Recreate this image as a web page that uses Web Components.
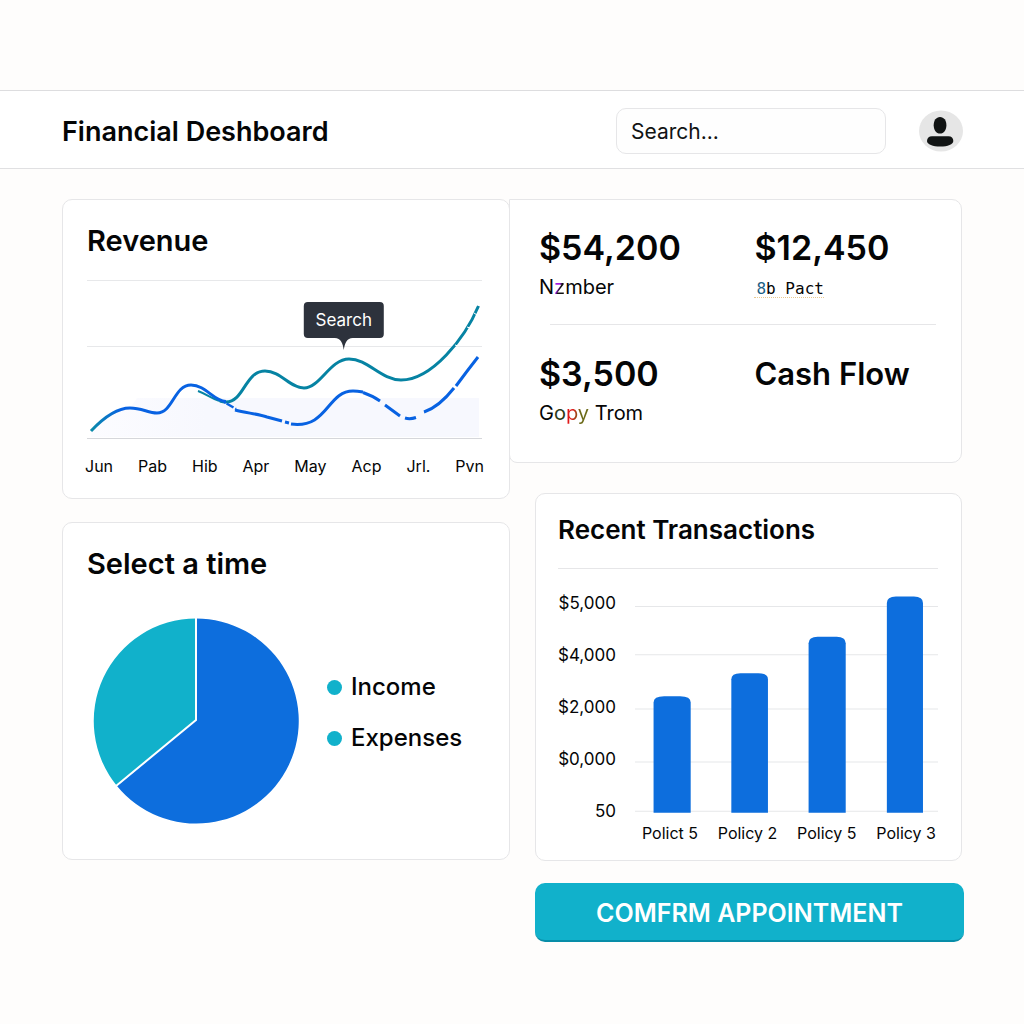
<!DOCTYPE html>
<html lang="en">
<head>
<meta charset="utf-8">
<meta name="viewport" content="width=device-width, initial-scale=1">
<title>Financial Deshboard</title>
<style>
  body {
    margin: 0;
    padding-top: 90px;
    background: #fefdfc;
    color: #040506;
    font-family: Inter, "Liberation Sans", sans-serif;
    --line: #e6e6e8;
    --blue: #0d6edd;
    --teal: #11b1cb;
  }
</style>
</head>
<body>
<finance-dashboard></finance-dashboard>

<script>
const define = (name, html, setup) => {
  const template = document.createElement('template');
  template.innerHTML = html;
  customElements.define(name, class extends HTMLElement {
    constructor() {
      super();
      this.attachShadow({ mode: 'open' }).append(template.content.cloneNode(true));
    }
    connectedCallback() { if (setup) setup(this, this.shadowRoot); }
  });
};

define('user-avatar', `
  <style>
    :host { display: block; flex: none; }
    button { display: block; padding: 0; border: 0; background: none; cursor: pointer; }
    svg { display: block; }
  </style>
  <button type="button" aria-label="Account">
    <svg width="44" height="42" viewBox="0 0 44 42" aria-hidden="true">
      <ellipse cx="22" cy="21" rx="22" ry="20.5" fill="#e6e6e6"/>
      <path d="M21 7c4 0 6.400 3.600 6.400 8.200 0 4.700-2.600 8.300-6.400 8.300s-6.300-3.600-6.300-8.300C14.700 10.600 17.100 7 21 7z" fill="#111414"/>
      <path d="M13 26.300h16.500c3 0 4.800 2 4.800 4.600 0 3.300-5.600 5.700-13 5.700S8 34.200 8 30.900c0-2.600 2-4.600 5-4.600z" fill="#111414"/>
    </svg>
  </button>`);

define('search-box', `
  <style>
    :host { display: block; width: 270px; }
    input {
      display: block; box-sizing: border-box; width: 100%; height: 46px; padding: 0 14px;
      border: 1px solid var(--line); border-radius: 10px; background: #fefefe;
      font: 400 21px/28px Inter, "Liberation Sans", sans-serif; color: #111;
    }
    input::placeholder { color: #111313; opacity: 1; }
  </style>
  <input type="search" aria-label="Search" placeholder="Search...">`);

define('page-header', `
  <style>
    :host {
      display: flex; align-items: center; gap: 33px; padding: 17px 61px 14px 62px;
      border-top: 1px solid #dddddf; border-bottom: 1px solid #e0e0e2; background: #fff;
    }
    h1 { flex: 1; margin: 0; padding-top: 2px; font-size: 27px; line-height: 36px; font-weight: 600; }
  </style>
  <h1><slot></slot></h1>
  <search-box></search-box>
  <user-avatar></user-avatar>`);

define('panel-card', `
  <style>
    :host {
      display: block; box-sizing: border-box; background: #fff;
      border: 1px solid var(--line); border-radius: 10px;
      padding: 24px 27px 20px 24px;
    }
    ::slotted(h2) { margin: 0; font-size: 29px; line-height: 34px; font-weight: 600; }
  </style>
  <slot name="title"></slot>
  <slot></slot>`);

define('revenue-chart', `
  <style>
    :host { display: block; margin-top: 22px; }
    .plot { position: relative; }
    svg { display: block; width: 100%; height: auto; overflow: visible; }
    .tip {
      position: absolute; left: 65%; top: 22px; transform: translateX(-50%);
      padding: 6px 12px; border-radius: 4px; background: #2d323c;
      color: #fff; font-size: 17px; line-height: 24px;
    }
    .tip svg { position: absolute; top: 100%; left: 50%; width: 18px; margin-left: -9px; }
    .months { display: flex; justify-content: space-between; margin: 14px -2px 0; font-size: 16px; line-height: 24px; }
  </style>
  <div class="plot">
    <svg viewBox="0 0 395 160" fill="none" role="img" aria-label="Revenue by month">
      <defs>
        <linearGradient id="start" gradientUnits="userSpaceOnUse" x1="4" y1="0" x2="34" y2="0">
          <stop offset="0" stop-color="#0b8ba8"/><stop offset="1" stop-color="#0862e2"/>
        </linearGradient>
        <linearGradient id="shade" gradientUnits="userSpaceOnUse" x1="0" y1="0" x2="120" y2="0">
          <stop offset="0" stop-color="#fcfcff"/><stop offset="1" stop-color="#f7f8fe"/>
        </linearGradient>
      </defs>
      <path d="M4 157V151C20 135 32 128 43 128L50 118H392V157z" fill="url(#shade)"/>
      <path d="M0 .5H395M0 66.500H395" stroke="#e7e8ea"/>
      <path d="M0 158.500H395" stroke="#d6d7db"/>
      <path d="M111 111C122 115 128 122 139 122" stroke="#0683a3" stroke-width="2"/>
      <g stroke-width="3">
        <path d="M133 121Q136 122 139 122C157 122 158 91 178 91C194 91 203 108 217 108C233 108 243 79 262 79C281 79 294 100 314 100C345 100 378 58 391.500 26" stroke="#0683a3"/>
        <path d="M4 151C20 134 33 128 43 128C55 128 61 133 70 133C86 133 87 105 104 105C119 105 126 121 139 121.500" stroke="url(#start)"/>
        <path d="M137 122L149 129" stroke="#0862e2" stroke-width="2.500" stroke-dasharray="2 1 8 2"/>
        <path d="M148 130C160 133 171 134 180 137L195 141" stroke="#0862e2"/>
        <path d="M198 142l4 1M204 144C241 149 240 111 266 111Q270 111 276 112" stroke="#0862e2"/>
        <path d="M276 112.500Q286 116 293 121M298 125L313 136M318 138Q323 139.500 329 137.500M337 132Q352 127 367 108M369 106Q380 91 391 77" stroke="#0862e2"/>
      </g>
      <path d="M368 65l3 1M380 47l3 1M387 33l3 2" stroke="#fff" stroke-width="1"/>
    </svg>
    <div class="tip" role="tooltip">Search
      <svg viewBox="0 0 18 12" aria-hidden="true"><path d="M0 0C6 0 8 5 9 12C10 5 12 0 18 0z" fill="#2d323c"/></svg>
    </div>
  </div>
  <div class="months"></div>`,
  (host, root) => {
    root.querySelector('.months').innerHTML =
      host.getAttribute('months').split(' ').map(m => `<span>${m}</span>`).join('');
  });

define('share-chart', `
  <style>
    :host { display: flex; align-items: center; gap: 28px; margin: 37px 0 15px; padding-left: 6px; }
    svg { display: block; flex: 0 1 206px; min-width: 0; }
    ul { display: grid; gap: 19px; margin: 0; padding: 0 0 17px; list-style: none; font-size: 24px; line-height: 32px; font-weight: 500; }
    li { display: flex; align-items: center; gap: 9px; }
    li::before { content: ""; width: 15px; height: 15px; border-radius: 50%; background: var(--teal); }
  </style>
  <svg viewBox="0 0 206 206" role="img" aria-label="Income and expenses">
    <path d="M103 102V.5A102.500 102.500 0 1 1 24 168z" fill="var(--blue)"/>
    <path d="M103 102L24 168A102.500 102.500 0 0 1 103 .5z" fill="var(--teal)"/>
    <path d="M103 0V102L23 168" fill="none" stroke="#fff" stroke-width="2"/>
  </svg>
  <ul><li>Income</li><li>Expenses</li></ul>`);

define('stat-item', `
  <style>
    :host { display: block; }
    strong { display: block; font-size: 34px; line-height: 44px; font-weight: 600; }
    :host([kind="text"]) strong { font-size: 31px; }
    span { display: block; margin-top: 4px; font-size: 20px; line-height: 26px; }
  </style>
  <strong><slot name="value"></slot></strong>
  <span><slot></slot></span>`);

define('stats-panel', `
  <style>
    :host {
      display: block; box-sizing: border-box; margin-left: -1px; padding: 26px 25px 36px 29px;
      background: #fff; border: 1px solid var(--line); border-radius: 0 10px 10px 8px;
    }
    .row { display: grid; grid-template-columns: 216fr 182fr; }
    b { font-weight: inherit; }
    hr { margin: 24px 0 27px 11px; border: 0; border-top: 1px solid var(--line); }
    .violet { color: transparent; background: linear-gradient(115deg, #a21be0 45%, #101010 55%); background-clip: text; }
    .red { color: transparent; background: linear-gradient(100deg, #e01818 30%, #6b6a18 60%); background-clip: text; }
    .olive { color: #2c3a18; }
    .glitch {
      display: inline-block; padding-left: 2px; font: 16px/16px "DejaVu Sans Mono", monospace;
      border-bottom: 1px dotted #e9c88f;
    }
    .glitch i { font-style: normal; color: #1d5f86; }
  </style>
  <div class="row">
    <stat-item><b slot="value">$54,200</b>N<span class="violet">z</span>mber</stat-item>
    <stat-item><b slot="value">$12,450</b><span class="glitch"><i>8</i>b Pact</span></stat-item>
  </div>
  <hr>
  <div class="row">
    <stat-item><b slot="value">$3,500</b>G<span class="olive">o</span><span class="red">py</span> Trom</stat-item>
    <stat-item kind="text"><b slot="value">Cash Flow</b></stat-item>
  </div>`);

define('transactions-chart', `
  <style>
    :host { display: flex; gap: 19px; margin-top: 22px; padding-top: 23px; border-top: 1px solid var(--line); }
    .axis { display: flex; flex-direction: column; gap: 30px; flex: none; text-align: right; font-size: 17px; line-height: 22px; }
    .plot { flex: 1; min-width: 0; }
    svg { display: block; width: 100%; height: auto; }
    .names { display: flex; justify-content: space-between; margin-top: 9px; padding: 0 2px 0 7px; font-size: 16px; line-height: 22px; }
  </style>
  <div class="axis"><span>$5,000</span><span>$4,000</span><span>$2,000</span><span>$0,000</span><span>50</span></div>
  <div class="plot">
    <svg viewBox="0 0 302 220" role="img" aria-label="Transactions by policy">
      <path d="M0 14.500H302M0 62.500H302M0 116.500H302M0 169.500H302M0 218.500H302" stroke="#e6e7e9"/>
      <g fill="var(--blue)">
        <path d="M18.500 220V110Q18.500 104 29 104H45Q55.500 104 55.500 110V220z"/>
        <path d="M96 220V87Q96 81 105 81H123Q132.500 81 132.500 87V220z"/>
        <path d="M173 220V51Q173 44.500 182 44.500H201Q210 44.500 210 51V220z"/>
        <path d="M251 220V11Q251 4.500 260 4.500H278Q287 4.500 287 11V220z"/>
      </g>
    </svg>
    <div class="names"><span>Polict 5</span><span>Policy 2</span><span>Policy 5</span><span>Policy 3</span></div>
  </div>`);

define('action-button', `
  <style>
    :host { display: block; margin-right: -2px; }
    button {
      display: block; box-sizing: border-box; width: 100%; padding: 14px 16px 11px;
      border: 0; border-bottom: 2px solid #078da8; border-radius: 10px;
      background: var(--teal); color: #fff; cursor: pointer;
      font: 600 25px/32px Inter, "Liberation Sans", sans-serif;
    }
  </style>
  <button type="button"><slot></slot></button>`);

define('finance-dashboard', `
  <style>
    :host { display: block; }
    main { display: grid; grid-template-columns: 448fr 452fr; align-items: start; padding: 30px 62px; }
    .left { display: grid; gap: 23px; min-width: 0; }
    .lower { display: grid; gap: 22px; margin: 30px 0 0 25px; }
    .recent { padding: 20px 23px 16px 22px; }
    .recent h2 { font-size: 26px; line-height: 32px; }
  </style>
  <page-header>Financial Deshboard</page-header>
  <main>
    <div class="left">
      <panel-card>
        <h2 slot="title">Revenue</h2>
        <revenue-chart months="Jun Pab Hib Apr May Acp Jrl. Pvn"></revenue-chart>
      </panel-card>
      <panel-card>
        <h2 slot="title">Select a time</h2>
        <share-chart></share-chart>
      </panel-card>
    </div>
    <div class="right">
      <stats-panel></stats-panel>
      <div class="lower">
        <panel-card class="recent">
          <h2 slot="title">Recent Transactions</h2>
          <transactions-chart></transactions-chart>
        </panel-card>
        <action-button>COMFRM APPOINTMENT</action-button>
      </div>
    </div>
  </main>`);
</script>
</body>
</html>
